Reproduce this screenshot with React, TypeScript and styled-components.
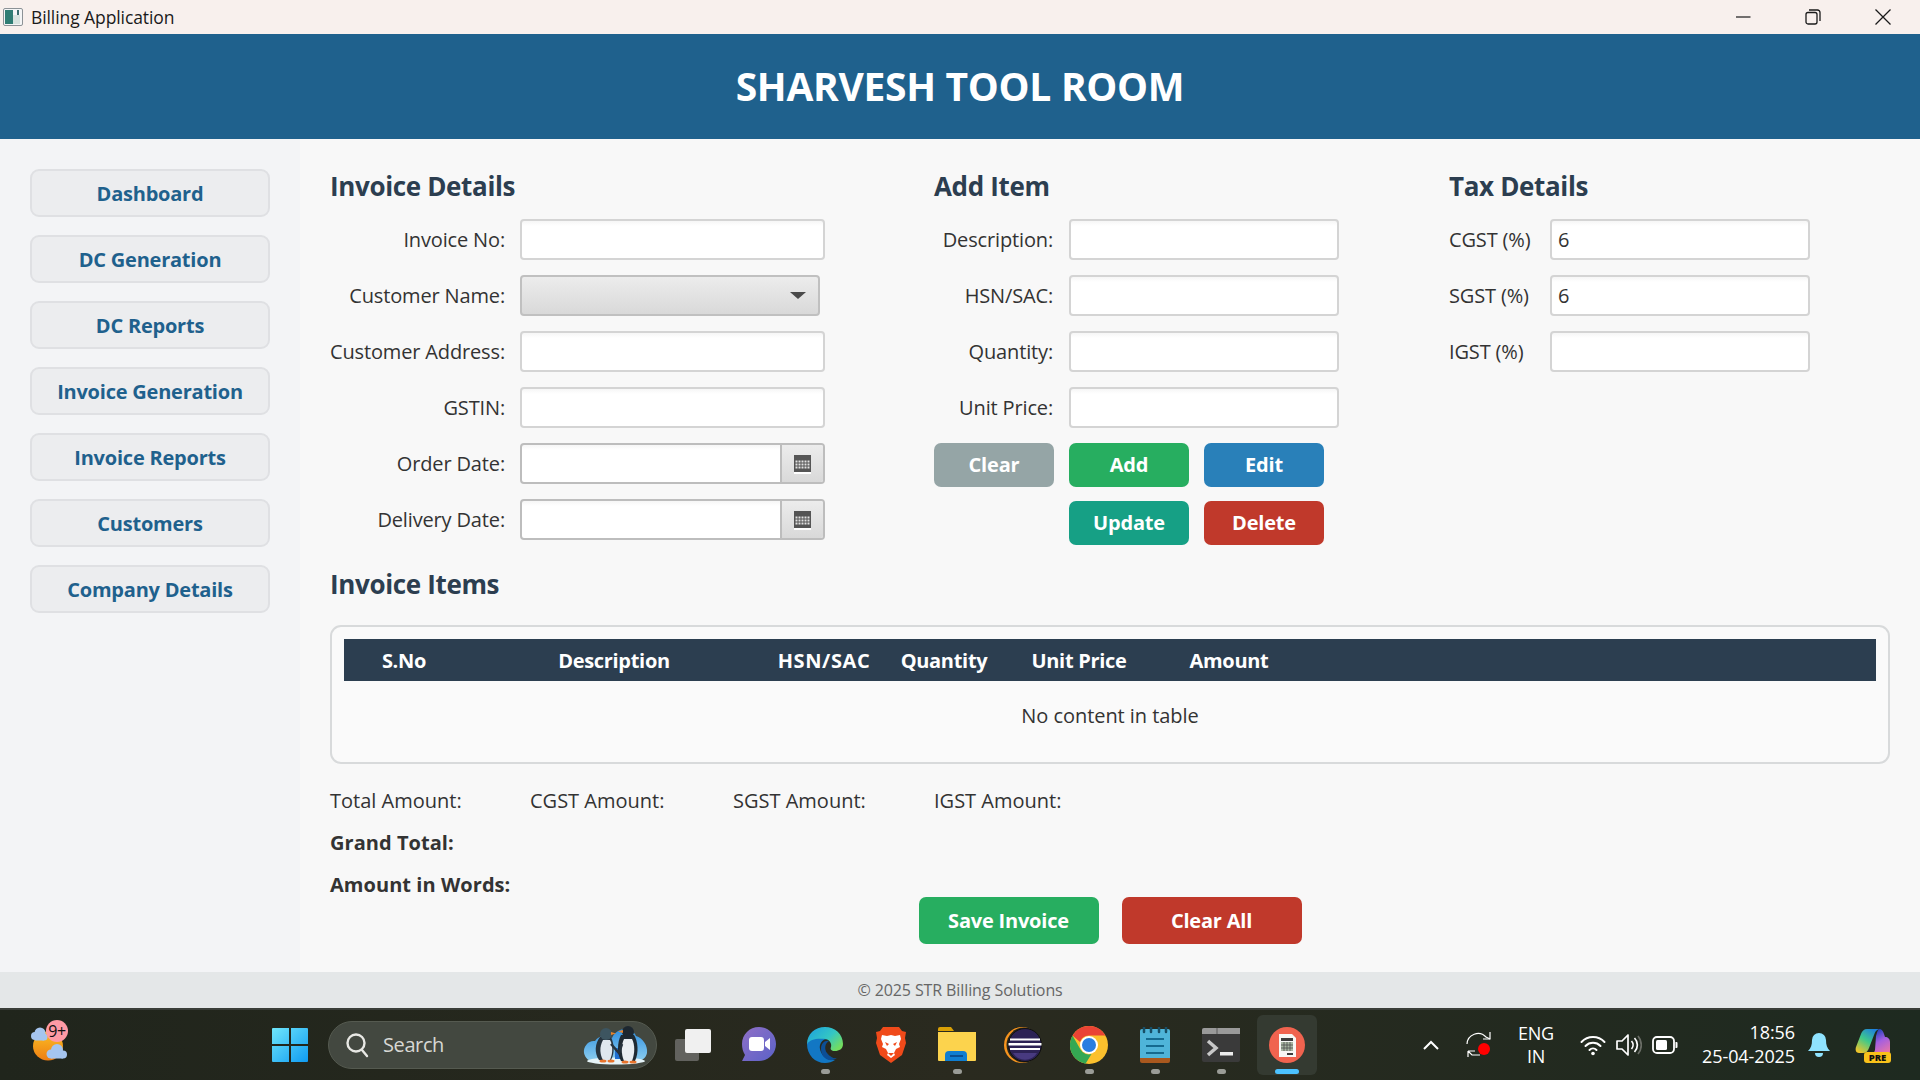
import React from "react";
import styled, { createGlobalStyle } from "styled-components";

const FONT = `"Open Sans", "Noto Sans", sans-serif`;

const GlobalStyle = createGlobalStyle`
    html, body {
        margin: 0;
        padding: 0;
        height: 100%;
        overflow: hidden;
        font-family: ${FONT};
    }
    * {
        box-sizing: border-box;
    }
`;

const Page = styled.div`
    display: flex;
    flex-direction: column;
    width: 1920px;
    height: 1080px;
    overflow: hidden;
    background: #f8f8f8;
`;

/* window title bar */
const TitleBar = styled.div`
    display: flex;
    align-items: center;
    height: 34px;
    flex: none;
    background: #f8f0ed;
    padding-left: 3px;
`;

const TitleText = styled.span`
    margin-left: 8px;
    font-size: 17.5px;
    letter-spacing: -0.09px;
    color: #1a1a1a;
`;

const WindowControls = styled.div`
    display: flex;
    margin-left: auto;
    padding-right: 2px;
`;

const WindowButton = styled.div`
    display: flex;
    align-items: center;
    justify-content: center;
    width: 70px;
    height: 34px;
`;

const Banner = styled.header`
    display: flex;
    align-items: center;
    justify-content: center;
    height: 105px;
    flex: none;
    padding-bottom: 2px;
    background: #1f618d;
    color: #ffffff;
    font-size: 39px;
    font-weight: 700;
    letter-spacing: -0.3px;
`;

const Body = styled.div`
    display: flex;
    flex: 1;
    min-height: 0;
`;

const Sidebar = styled.nav`
    display: flex;
    flex-direction: column;
    gap: 18px;
    width: 300px;
    flex: none;
    padding: 30px;
    background: #f3f4f6;
`;

const NavButton = styled.button`
    height: 48px;
    padding: 0;
    border: 2px solid #dfe0e3;
    border-radius: 9px;
    background: #ecedef;
    color: #1f618d;
    font-family: ${FONT};
    font-size: 20px;
    font-weight: 700;
    letter-spacing: -0.22px;
`;

const Content = styled.main`
    display: flex;
    flex-direction: column;
    flex: 1;
    min-width: 0;
    padding: 30px 30px 0;
`;

const Columns = styled.div`
    display: flex;
`;

const Column = styled.section<{ $width: number }>`
    width: ${(p) => p.$width}px;
    flex: none;
`;

const Heading = styled.h2`
    margin: 0 0 14px;
    height: 36px;
    font-size: 26px;
    line-height: 34px;
    font-weight: 700;
    letter-spacing: -0.35px;
    color: #2c3e50;
`;

const FormGrid = styled.div<{ $label: number; $field: number; $gap: number }>`
    display: grid;
    grid-template-columns: ${(p) => p.$label}px ${(p) => p.$field}px;
    column-gap: ${(p) => p.$gap}px;
    grid-auto-rows: 41px;
    row-gap: 15px;
    align-items: center;
`;

const Label = styled.label<{ $left?: boolean }>`
    text-align: ${(p) => (p.$left ? "left" : "right")};
    font-size: 20px;
    letter-spacing: -0.15px;
    color: #333333;
    white-space: nowrap;
`;

const TextInput = styled.input`
    width: 100%;
    height: 41px;
    padding: 0 6px;
    border: 2px solid #d4d4d4;
    border-radius: 4px;
    background: linear-gradient(#f6f6f6, #ffffff 5px);
    color: #333333;
    font-family: ${FONT};
    font-size: 20px;
    outline: none;
`;

const ComboBox = styled.div`
    display: flex;
    align-items: center;
    justify-content: flex-end;
    width: 300px;
    height: 41px;
    padding-right: 12px;
    border: 2px solid #c0c0c0;
    border-radius: 4px;
    background: linear-gradient(#ececec, #d9d9d9);
`;

const ComboArrow = styled.span`
    width: 0;
    height: 0;
    border-left: 8px solid transparent;
    border-right: 8px solid transparent;
    border-top: 7px solid #4a4a4a;
`;

const DateField = styled.div`
    display: flex;
    width: 305px;
    height: 41px;
    border: 2px solid #bdbdbd;
    border-radius: 4px;
    overflow: hidden;
    background: linear-gradient(#f6f6f6, #ffffff 5px);
`;

const DateValue = styled.div`
    flex: 1;
`;

const DateButton = styled.div`
    display: flex;
    align-items: center;
    justify-content: center;
    width: 43px;
    padding-top: 2px;
    border-left: 2px solid #bdbdbd;
    background: linear-gradient(#ececec, #d9d9d9);
`;

const ActionGrid = styled.div`
    display: grid;
    grid-template-columns: 120px 120px 120px;
    grid-template-rows: 44px 44px;
    column-gap: 15px;
    row-gap: 14px;
    margin-top: 15px;
`;

const ActionButton = styled.button<{ $bg: string; $col?: number }>`
    ${(p) => (p.$col ? `grid-column: ${p.$col};` : "")}
    height: 44px;
    padding: 0 0 2px;
    border: none;
    border-radius: 7px;
    background: ${(p) => p.$bg};
    color: #ffffff;
    font-family: ${FONT};
    font-size: 20px;
    font-weight: 700;
    letter-spacing: -0.2px;
`;

const ItemsHeading = styled(Heading)`
    margin: 22px 0 22px;
`;

const TableCard = styled.div`
    height: 139px;
    flex: none;
    padding: 12px;
    border: 2px solid #d8dadb;
    border-radius: 11px;
    background: #fafafa;
`;

const TableHeader = styled.div`
    display: flex;
    align-items: center;
    height: 42px;
    background: #2c3e50;
`;

const HeaderCell = styled.div<{ $width: number; $caps?: boolean }>`
    width: ${(p) => p.$width}px;
    flex: none;
    text-align: center;
    color: #ffffff;
    font-size: 20px;
    font-weight: 700;
    letter-spacing: ${(p) => (p.$caps ? "0.6px" : "-0.3px")};
    white-space: nowrap;
`;

const EmptyRow = styled.div`
    display: flex;
    align-items: center;
    justify-content: center;
    height: 68px;
    font-size: 20px;
    letter-spacing: -0.05px;
    color: #333333;
`;

const TotalsRow = styled.div`
    display: grid;
    grid-template-columns: 200px 203px 201px auto;
    margin-top: 25px;
`;

const TotalText = styled.div<{ $bold?: boolean }>`
    height: 24px;
    font-size: 20px;
    line-height: 24px;
    font-weight: ${(p) => (p.$bold ? 700 : 400)};
    letter-spacing: ${(p) => (p.$bold ? "0.05px" : "0")};
    color: #333333;
`;

const BoldLine = styled(TotalText)`
    margin-top: 18px;
`;

const FooterActions = styled.div`
    display: flex;
    justify-content: center;
    gap: 23px;
`;

const BigButton = styled.button<{ $bg: string }>`
    width: 180px;
    height: 47px;
    padding: 0;
    border: none;
    border-radius: 7px;
    background: ${(p) => p.$bg};
    color: #ffffff;
    font-family: ${FONT};
    font-size: 20px;
    font-weight: 700;
    letter-spacing: -0.2px;
`;

const AppFooter = styled.footer`
    display: flex;
    align-items: center;
    justify-content: center;
    height: 36px;
    flex: none;
    background: #e4e7e8;
    color: #666666;
    font-size: 16px;
    letter-spacing: -0.1px;
`;

/* windows taskbar */
const Taskbar = styled.div`
    display: flex;
    align-items: center;
    height: 72px;
    flex: none;
    padding: 0 29px 0 30px;
    border-top: 2px solid #3a3e38;
    background: linear-gradient(90deg, #20251c, #2a2a1f 50%, #1e2a20);
`;

const Weather = styled.div`
    position: relative;
    width: 40px;
    height: 42px;
    flex: none;
    margin-bottom: 10px;
`;

const WeatherBadge = styled.span`
    position: absolute;
    top: 1px;
    right: 2px;
    width: 22px;
    height: 22px;
    border-radius: 50%;
    background: #ff9aa5;
    color: #111111;
    font-size: 16px;
    line-height: 22px;
    text-align: center;
    letter-spacing: -0.5px;
`;

const StartSlot = styled.div`
    display: flex;
    margin-left: 202px;
    flex: none;
`;

const SearchBox = styled.div`
    display: flex;
    align-items: center;
    width: 329px;
    height: 48px;
    flex: none;
    margin-left: 20px;
    padding: 0 8px 0 16px;
    border: 1px solid #555a50;
    border-radius: 24px;
    background: #434840;
`;

const SearchText = styled.span`
    margin-left: 14px;
    margin-bottom: 2px;
    color: #d8d8d4;
    font-size: 20px;
    letter-spacing: -0.4px;
`;

const Mascot = styled.div`
    display: flex;
    margin-left: auto;
`;

const Dock = styled.div`
    display: flex;
    margin-left: 3px;
    flex: none;
`;

const DockSlot = styled.div<{ $active?: boolean }>`
    position: relative;
    display: flex;
    align-items: center;
    justify-content: center;
    width: 60px;
    height: 60px;
    margin: 0 3px;
    border-radius: 6px;
    background: ${(p) => (p.$active ? "#343a31" : "transparent")};
`;

const RunDot = styled.span<{ $active?: boolean }>`
    position: absolute;
    bottom: 1px;
    left: 50%;
    width: ${(p) => (p.$active ? 24 : 9)}px;
    height: 5px;
    margin-left: ${(p) => (p.$active ? -12 : -4)}px;
    border-radius: 3px;
    background: ${(p) => (p.$active ? "#4cc2ff" : "#9a9c97")};
`;

const Tray = styled.div`
    display: flex;
    align-items: center;
    margin-left: auto;
    color: #ffffff;
`;

const TrayIcon = styled.div<{ $gap?: number }>`
    display: flex;
    align-items: center;
    justify-content: center;
    width: 36px;
    height: 36px;
    margin-left: ${(p) => p.$gap ?? 0}px;
`;

const LangBox = styled.div`
    display: flex;
    flex-direction: column;
    align-items: center;
    width: 50px;
    margin-left: 14px;
    margin-right: 14px;
    font-size: 18px;
    line-height: 23px;
    letter-spacing: -0.2px;
`;

const Clock = styled.div`
    width: 112px;
    margin-bottom: 2px;
    text-align: right;
    font-size: 18px;
    line-height: 24px;
    letter-spacing: -0.1px;
`;

const BellSlot = styled.div`
    display: flex;
    justify-content: center;
    width: 24px;
    margin-left: 12px;
`;

const CopilotSlot = styled.div`
    position: relative;
    width: 36px;
    height: 36px;
    margin-left: 24px;
`;

const PreTag = styled.span`
    position: absolute;
    right: 0;
    bottom: 0;
    width: 27px;
    height: 11px;
    border-radius: 3px;
    background: #f9c21a;
    color: #111111;
    font-size: 9.5px;
    font-weight: 800;
    line-height: 11px;
    text-align: center;
`;

const AppGlyph = () => (
    <svg width="20" height="20" viewBox="0 0 20 20">
        <rect x="0.5" y="1.5" width="19" height="17" rx="1.5" fill="#f4f5f6" stroke="#8c9296" />
        <rect x="2" y="3" width="8" height="14" fill="#2f7d74" />
        <rect x="10" y="8" width="7" height="9" fill="#d7e3df" />
        <rect x="14" y="3" width="2" height="5" fill="#3c6e70" />
    </svg>
);

const MinimizeIcon = () => (
    <svg width="16" height="16" viewBox="0 0 16 16">
        <path d="M1 8h14.500" stroke="#1a1a1a" strokeWidth="1.200" />
    </svg>
);

const RestoreIcon = () => (
    <svg width="16" height="16" viewBox="0 0 16 16" fill="none" stroke="#1a1a1a" strokeWidth="1.300">
        <rect x="1" y="3.500" width="11" height="11.500" rx="2" />
        <path d="M4 1h8.500A2.500 2.500 0 0 1 15 3.500V12" />
    </svg>
);

const CloseIcon = () => (
    <svg width="16" height="16" viewBox="0 0 16 16">
        <path d="M.5.5l15 15M15.500.5l-15 15" stroke="#1a1a1a" strokeWidth="1.300" />
    </svg>
);

const CalendarIcon = () => (
    <svg width="17" height="19" viewBox="0 0 17 19">
        <rect x="0" y="0" width="17" height="17" fill="#555555" />
        <rect x="0" y="17" width="17" height="2" fill="#ffffff" />
        {[6, 9, 12].map((y) =>
            [2, 5, 8, 11, 14].map((x) => (
                <rect key={`${x}-${y}`} x={x - 0.5} y={y - 0.5} width="2" height="2" fill="#e2e2e2" />
            ))
        )}
    </svg>
);

const WeatherIcon = () => (
    <svg width="40" height="42" viewBox="0 0 40 42">
        <defs>
            <linearGradient id="sun" x1="0" y1="0" x2="0" y2="1">
                <stop offset="0" stopColor="#fbbf24" />
                <stop offset="1" stopColor="#ee7d12" />
            </linearGradient>
        </defs>
        <ellipse cx="18" cy="27" rx="15" ry="14.500" fill="url(#sun)" />
        <g fill="#a5c5ef">
            <circle cx="5" cy="17" r="4" />
            <circle cx="10" cy="14" r="5.500" />
            <circle cx="14" cy="18" r="3.500" />
            <rect x="5" y="17" width="9" height="4.500" />
            <circle cx="21" cy="35" r="4.500" />
            <circle cx="27" cy="31" r="6" />
            <circle cx="33" cy="35.500" r="4" />
            <rect x="21" y="35" width="12" height="4.500" />
        </g>
    </svg>
);

const WindowsLogo = () => (
    <svg width="36" height="36" viewBox="0 0 36 36">
        <defs>
            <linearGradient id="win" x1="0" y1="0" x2="1" y2="1">
                <stop offset="0" stopColor="#6fe6fb" />
                <stop offset="1" stopColor="#0f9bf2" />
            </linearGradient>
        </defs>
        <path d="M1 1h16v16H0V2a1 1 0 0 1 1-1zM19 1h16a1 1 0 0 1 1 1v15H19zM0 19h17v16H1a1 1 0 0 1-1-1zM19 19h17v15a1 1 0 0 1-1 1H19z" fill="url(#win)" />
    </svg>
);

const SearchIcon = () => (
    <svg width="24" height="26" viewBox="0 0 24 26" fill="none" stroke="#e8e8e4" strokeWidth="2.400">
        <circle cx="11" cy="11" r="8.500" />
        <path d="M17 18l5 6" strokeLinecap="round" />
    </svg>
);

const PenguinIcon = () => (
    <svg width="66" height="40" viewBox="0 0 66 40">
        <defs>
            <linearGradient id="sky" x1="0" y1="0" x2="0" y2="1">
                <stop offset="0" stopColor="#2f8fe0" />
                <stop offset="1" stopColor="#8fd0f0" />
            </linearGradient>
        </defs>
        <path d="M2 28C1 21 7 15 13 16 17 10 24 10 30 13 35 2 50 1 54 11 61 13 66 21 65 28 64 34 58 37 50 37H14C7 37 3 33 2 28z" fill="url(#sky)" />
        <ellipse cx="34" cy="36" rx="29" ry="3.500" fill="#e6f4f8" />
        <rect x="33" y="23" width="8" height="11" fill="#1f6fd0" />
        <path d="M18 12C13 18 12 28 17 35H29C33 28 32 18 29 12z" fill="#27333d" />
        <path d="M21 15C17 22 18 30 21 35H28C31 28 31 20 28 15z" fill="#dfe7ee" />
        <circle cx="24" cy="9" r="6" fill="#3d5560" />
        <path d="M29 7l5 1.500-5 1.500z" fill="#e8842c" />
        <path d="M39 10C35 18 35 28 39 36H53C57 28 56 16 52 10z" fill="#1f2a33" />
        <path d="M42 14C39 20 39 29 42 36H50C53 28 53 20 50 14z" fill="#e9eef2" />
        <circle cx="46" cy="7" r="6" fill="#1d2730" />
        <path d="M41 5l-5 1.500 5 1.500z" fill="#e8842c" />
        <path d="M29 19l8 9 3-9" fill="none" stroke="#27333d" strokeWidth="2.500" />
        <g fill="#e8742c">
            <ellipse cx="21" cy="36" rx="3.500" ry="1.500" />
            <ellipse cx="29" cy="36" rx="3.500" ry="1.500" />
            <ellipse cx="43" cy="37" rx="3.500" ry="1.500" />
            <ellipse cx="51" cy="37" rx="3.500" ry="1.500" />
        </g>
    </svg>
);

const TaskViewIcon = () => (
    <svg width="36" height="32" viewBox="0 0 36 32">
        <rect x="0" y="10" width="24" height="22" rx="2" fill="#62625e" />
        <rect x="10" y="0" width="26" height="24" rx="2" fill="#f0f0f0" />
    </svg>
);

const MeetIcon = () => (
    <svg width="34" height="36" viewBox="0 0 34 36">
        <defs>
            <linearGradient id="meet" x1="0" y1="0" x2="1" y2="1">
                <stop offset="0" stopColor="#8f6fc6" />
                <stop offset="1" stopColor="#5b62c8" />
            </linearGradient>
        </defs>
        <path d="M17 0c9.500 0 17 7.500 17 17s-7.500 17-17 17H0l3-6C1 25 0 21 0 17 0 7.500 7.500 0 17 0z" fill="url(#meet)" />
        <rect x="7" y="10" width="15" height="14" rx="3" fill="#ffffff" />
        <path d="M23 15l5-4v12l-5-4z" fill="#ffffff" />
    </svg>
);

const EdgeIcon = () => (
    <svg width="36" height="36" viewBox="0 0 36 36">
        <defs>
            <linearGradient id="edgeTop" x1="0" y1="0" x2="1" y2="0.700">
                <stop offset="0" stopColor="#1b9fe0" />
                <stop offset="0.6" stopColor="#34c6c4" />
                <stop offset="1" stopColor="#73dd5f" />
            </linearGradient>
        </defs>
        <path d="M0 17C0 7 8 0 18 0 28 0 36 7 36 17 36 22 32 24 28 24 24 24 23 22 24 20 25 17 23 12 17 12 10 12 7 17 7 21z" fill="url(#edgeTop)" />
        <path d="M0 17C0 28 8 36 18 36 22 36 25 35 28 33 20 34 14 28 13 22 12 17 15 13 19 12 10 11 3 12 0 17z" fill="#1277c4" />
        <path d="M14 22C14 16 18 13 22 14 18 16 17 22 20 26 23 30 27 32 30 31 24 36 14 32 14 22z" fill="#0c4f96" />
    </svg>
);

const BraveIcon = () => (
    <svg width="30" height="36" viewBox="0 0 30 36">
        <path d="M7 0h16l3 4 4 1-1 6 1 5-4 12-11 8-11-8L0 16l1-5-1-6 4-1z" fill="#f04a1a" />
        <path d="M15 8l4 1 5-1 1 4-2 5 1 3-4 2-2 4 1 2-4 3-4-3 1-2-2-4-4-2 1-3-2-5 1-4 5 1z" fill="#ffffff" />
        <path d="M9 15l4 2-2 2zM21 15l-4 2 2 2z" fill="#f04a1a" />
        <path d="M12 26h6l-3 3z" fill="#f04a1a" />
    </svg>
);

const FolderIcon = () => (
    <svg width="38" height="36" viewBox="0 0 38 36">
        <path d="M0 2a2 2 0 0 1 2-2h11l3 4h-16z" fill="#d9a006" />
        <path d="M0 5h38v28a1 1 0 0 1-1 1H1a1 1 0 0 1-1-1z" fill="#fcd34d" />
        <path d="M7 28a4 4 0 0 1 4-4h14a4 4 0 0 1 4 4v6H7z" fill="#0f7ed1" />
        <rect x="12" y="28" width="13" height="2" fill="#0a4f91" />
    </svg>
);

const EclipseIcon = () => (
    <svg width="38" height="38" viewBox="0 0 38 38">
        <circle cx="18" cy="19" r="18" fill="#f7941e" />
        <circle cx="20" cy="19" r="17.500" fill="#26261c" />
        <circle cx="21" cy="19" r="16.500" fill="#2c2255" stroke="#111111" />
        <path d="M6 12.500h30v2H6zM4.500 17h33v2.500h-33zM6 22h30v2H6z" fill="#ffffff" />
        <path d="M9 27h24a14 14 0 0 1-24 0z" fill="#483a80" />
    </svg>
);

const ChromeIcon = () => (
    <svg width="38" height="38" viewBox="0 0 38 38">
        <circle cx="19" cy="19" r="19" fill="#fbc02d" />
        <path d="M19 0a19 19 0 0 1 16.500 9.500H19a9.500 9.500 0 0 0-9 6.500L2.500 9.500A19 19 0 0 1 19 0z" fill="#ea4335" />
        <path d="M2.500 9.500L10.500 23.500a9.500 9.500 0 0 0 11 4.500L15.500 37.700A19 19 0 0 1 2.500 9.500z" fill="#34a853" />
        <circle cx="19" cy="19" r="9" fill="#ffffff" />
        <circle cx="19" cy="19" r="7" fill="#2a7de1" />
    </svg>
);

const NotepadIcon = () => (
    <svg width="30" height="36" viewBox="0 0 30 36">
        <rect x="0" y="2" width="30" height="31" rx="2" fill="#4fb4d9" />
        <path d="M0 31h30v3a2 2 0 0 1-2 2H2a2 2 0 0 1-2-2z" fill="#a9581e" />
        <path d="M6 11h18v2H6zM6 18h18v2H6zM6 25h18v2H6z" fill="#156a8f" />
        <path d="M4 0v5M11 0v5M19 0v5M26 0v5" stroke="#174e66" strokeWidth="2.500" strokeLinecap="round" />
    </svg>
);

const TerminalIcon = () => (
    <svg width="38" height="34" viewBox="0 0 38 34">
        <rect x="0" y="0" width="38" height="34" rx="2" fill="#3a3a3a" />
        <path d="M0 2a2 2 0 0 1 2-2h36v6H0z" fill="#9a9a9a" />
        <rect x="14" y="0" width="2" height="6" fill="#7a7a7a" />
        <path d="M6 13l8 7-8 7" fill="none" stroke="#c8c8c8" strokeWidth="3.500" />
        <rect x="18" y="24" width="13" height="3.500" fill="#ececec" />
    </svg>
);

const BillingIcon = () => (
    <svg width="36" height="36" viewBox="0 0 36 36">
        <circle cx="18" cy="18" r="18" fill="#f0634f" />
        <path d="M10 7h13l4 4v19H10z" fill="#f7f7f5" />
        <rect x="12" y="11" width="12" height="3" fill="#3d3d3d" />
        <rect x="12" y="15" width="12" height="9" fill="#a8b6a2" />
        <path d="M15 15v9M18 15v9M21 15v9M12 18h12M12 21h12" stroke="#4e4e4e" strokeWidth="0.800" />
        <rect x="18" y="26" width="6" height="2" fill="#3d3d3d" />
    </svg>
);

const SyncIcon = () => (
    <svg width="30" height="30" viewBox="0 0 30 30" fill="none" stroke="#ffffff" strokeWidth="1.200">
        <path d="M3 14A11 11 0 0 1 22 7l4 2" />
        <path d="M26 2v7h-7" />
        <path d="M4 21l4 4h8M4 21h7M4 21v6" />
        <circle cx="20" cy="19" r="6" fill="#ff0000" stroke="none" />
    </svg>
);

const ChevronIcon = () => (
    <svg width="18" height="12" viewBox="0 0 18 12" fill="none" stroke="#ffffff" strokeWidth="2">
        <path d="M2 10l7-7 7 7" />
    </svg>
);

const WifiIcon = () => (
    <svg width="26" height="22" viewBox="0 0 26 22" fill="none" stroke="#ffffff" strokeWidth="2" strokeLinecap="round">
        <path d="M1.500 8a16 16 0 0 1 23 0M5.500 12a10.500 10.500 0 0 1 15 0M9.500 16a5 5 0 0 1 7 0" />
        <circle cx="13" cy="19.500" r="1.800" fill="#ffffff" stroke="none" />
    </svg>
);

const SpeakerIcon = () => (
    <svg width="26" height="24" viewBox="0 0 26 24" fill="none" stroke="#ffffff" strokeWidth="1.700">
        <path d="M1 8h5l6-6v20l-6-6H1z" strokeLinejoin="round" />
        <path d="M15.500 8a6 6 0 0 1 0 8M18.500 5a10 10 0 0 1 0 14" />
        <path d="M22 3a14 14 0 0 1 0 18" stroke="#6a6d66" />
    </svg>
);

const BatteryIcon = () => (
    <svg width="26" height="18" viewBox="0 0 26 18" fill="none">
        <rect x="1" y="1" width="21" height="16" rx="4" stroke="#ffffff" strokeWidth="1.800" />
        <rect x="4" y="4" width="11" height="10" rx="1.500" fill="#ffffff" />
        <path d="M23.500 6h1a1 1 0 0 1 1 1v4a1 1 0 0 1-1 1h-1z" fill="#ffffff" />
    </svg>
);

const BellIcon = () => (
    <svg width="22" height="24" viewBox="0 0 22 24">
        <path d="M11 0a7 7 0 0 1 7 7c0 5 1 8 4 11H0c3-3 4-6 4-11a7 7 0 0 1 7-7z" fill="#8fe3ff" />
        <path d="M7 20h8a4 4 0 0 1-8 0z" fill="#8fe3ff" />
    </svg>
);

const CopilotIcon = () => (
    <svg width="36" height="30" viewBox="0 0 36 30">
        <defs>
            <linearGradient id="copA" x1="0.800" y1="0" x2="0.200" y2="1">
                <stop offset="0" stopColor="#1d7fe0" />
                <stop offset="0.500" stopColor="#3fc98a" />
                <stop offset="1" stopColor="#f0c52a" />
            </linearGradient>
            <linearGradient id="copB" x1="0.300" y1="0" x2="0.700" y2="1">
                <stop offset="0" stopColor="#143fb8" />
                <stop offset="0.450" stopColor="#a45fe0" />
                <stop offset="1" stopColor="#f078a0" />
            </linearGradient>
        </defs>
        <path d="M21 9C22 6 22 4 24 2 27 2 28 4 29 7L30 10C33 10 35 12 35 15V24C35 27 33 29 30 29H16C18 28 19 26 20 23z" fill="url(#copB)" />
        <path d="M4 26C1 26 0 23 1 20L6 7C7 4 9 2 12 2H24C21 3 20 5 19 8L14 21C13 24 11 26 8 26z" fill="url(#copA)" />
    </svg>
);

const navItems = [
    "Dashboard",
    "DC Generation",
    "DC Reports",
    "Invoice Generation",
    "Invoice Reports",
    "Customers",
    "Company Details",
];

const tableColumns: [string, number][] = [
    ["S.No", 120],
    ["Description", 300],
    ["HSN/SAC", 120],
    ["Quantity", 120],
    ["Unit Price", 150],
    ["Amount", 150],
];

const dockIcons = [
    { icon: <TaskViewIcon /> },
    { icon: <MeetIcon /> },
    { icon: <EdgeIcon />, running: true },
    { icon: <BraveIcon /> },
    { icon: <FolderIcon />, running: true },
    { icon: <EclipseIcon /> },
    { icon: <ChromeIcon />, running: true },
    { icon: <NotepadIcon />, running: true },
    { icon: <TerminalIcon />, running: true },
    { icon: <BillingIcon />, running: true, active: true },
];

const DateInput = () => (
    <DateField>
        <DateValue />
        <DateButton>
            <CalendarIcon />
        </DateButton>
    </DateField>
);

export default function App() {
    return (
        <Page>
            <GlobalStyle />
            <TitleBar>
                <AppGlyph />
                <TitleText>Billing Application</TitleText>
                <WindowControls>
                    <WindowButton>
                        <MinimizeIcon />
                    </WindowButton>
                    <WindowButton>
                        <RestoreIcon />
                    </WindowButton>
                    <WindowButton>
                        <CloseIcon />
                    </WindowButton>
                </WindowControls>
            </TitleBar>
            <Banner>SHARVESH TOOL ROOM</Banner>
            <Body>
                <Sidebar>
                    {navItems.map((item) => (
                        <NavButton key={item}>{item}</NavButton>
                    ))}
                </Sidebar>
                <Content>
                    <Columns>
                        <Column $width={604}>
                            <Heading>Invoice Details</Heading>
                            <FormGrid $label={175} $field={305} $gap={15}>
                                <Label>Invoice No:</Label>
                                <TextInput />
                                <Label>Customer Name:</Label>
                                <ComboBox>
                                    <ComboArrow />
                                </ComboBox>
                                <Label>Customer Address:</Label>
                                <TextInput />
                                <Label>GSTIN:</Label>
                                <TextInput />
                                <Label>Order Date:</Label>
                                <DateInput />
                                <Label>Delivery Date:</Label>
                                <DateInput />
                            </FormGrid>
                        </Column>
                        <Column $width={515}>
                            <Heading>Add Item</Heading>
                            <FormGrid $label={119} $field={270} $gap={16}>
                                <Label>Description:</Label>
                                <TextInput />
                                <Label>HSN/SAC:</Label>
                                <TextInput />
                                <Label>Quantity:</Label>
                                <TextInput />
                                <Label>Unit Price:</Label>
                                <TextInput />
                            </FormGrid>
                            <ActionGrid>
                                <ActionButton $bg="#95a5a6">Clear</ActionButton>
                                <ActionButton $bg="#27ae60">Add</ActionButton>
                                <ActionButton $bg="#2980b9">Edit</ActionButton>
                                <ActionButton $bg="#16a085" $col={2}>
                                    Update
                                </ActionButton>
                                <ActionButton $bg="#c0392b">Delete</ActionButton>
                            </ActionGrid>
                        </Column>
                        <Column $width={361}>
                            <Heading>Tax Details</Heading>
                            <FormGrid $label={86} $field={260} $gap={15}>
                                <Label $left>CGST (%)</Label>
                                <TextInput defaultValue="6" />
                                <Label $left>SGST (%)</Label>
                                <TextInput defaultValue="6" />
                                <Label $left>IGST (%)</Label>
                                <TextInput />
                            </FormGrid>
                        </Column>
                    </Columns>
                    <ItemsHeading>Invoice Items</ItemsHeading>
                    <TableCard>
                        <TableHeader>
                            {tableColumns.map(([name, width]) => (
                                <HeaderCell key={name} $width={width} $caps={name === "HSN/SAC"}>
                                    {name}
                                </HeaderCell>
                            ))}
                        </TableHeader>
                        <EmptyRow>No content in table</EmptyRow>
                    </TableCard>
                    <TotalsRow>
                        <TotalText>Total Amount:</TotalText>
                        <TotalText>CGST Amount:</TotalText>
                        <TotalText>SGST Amount:</TotalText>
                        <TotalText>IGST Amount:</TotalText>
                    </TotalsRow>
                    <BoldLine $bold>Grand Total:</BoldLine>
                    <BoldLine $bold>Amount in Words:</BoldLine>
                    <FooterActions>
                        <BigButton $bg="#27ae60">Save Invoice</BigButton>
                        <BigButton $bg="#c0392b">Clear All</BigButton>
                    </FooterActions>
                </Content>
            </Body>
            <AppFooter>© 2025 STR Billing Solutions</AppFooter>
            <Taskbar>
                <Weather>
                    <WeatherIcon />
                    <WeatherBadge>9+</WeatherBadge>
                </Weather>
                <StartSlot>
                    <WindowsLogo />
                </StartSlot>
                <SearchBox>
                    <SearchIcon />
                    <SearchText>Search</SearchText>
                    <Mascot>
                        <PenguinIcon />
                    </Mascot>
                </SearchBox>
                <Dock>
                    {dockIcons.map((item, i) => (
                        <DockSlot key={i} $active={item.active}>
                            {item.icon}
                            {item.running && <RunDot $active={item.active} />}
                        </DockSlot>
                    ))}
                </Dock>
                <Tray>
                    <TrayIcon>
                        <ChevronIcon />
                    </TrayIcon>
                    <TrayIcon $gap={12}>
                        <SyncIcon />
                    </TrayIcon>
                    <LangBox>
                        <span>ENG</span>
                        <span>IN</span>
                    </LangBox>
                    <TrayIcon>
                        <WifiIcon />
                    </TrayIcon>
                    <TrayIcon>
                        <SpeakerIcon />
                    </TrayIcon>
                    <TrayIcon>
                        <BatteryIcon />
                    </TrayIcon>
                    <Clock>
                        18:56
                        <br />
                        25-04-2025
                    </Clock>
                    <BellSlot>
                        <BellIcon />
                    </BellSlot>
                    <CopilotSlot>
                        <CopilotIcon />
                        <PreTag>PRE</PreTag>
                    </CopilotSlot>
                </Tray>
            </Taskbar>
        </Page>
    );
}
